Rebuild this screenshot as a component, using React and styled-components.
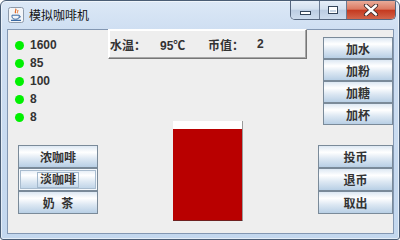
import React from "react";
import styled, { createGlobalStyle, css } from "styled-components";

const Global = createGlobalStyle`
  html, body { margin: 0; padding: 0; background: #ffffff; }
  * { box-sizing: border-box; }
`;

const Window = styled.div`
  width: 400px;
  height: 240px;
  border: 1px solid #4a5d75;
  border-radius: 6px 6px 3px 3px;
  background: linear-gradient(180deg, #dce8f6 0px, #cfdff2 28px, #c3d7ee 100%);
  box-shadow: inset 0 0 0 1px rgba(255, 255, 255, 0.55);
  display: flex;
  flex-direction: column;
  overflow: hidden;
`;

const TitleBar = styled.div`
  height: 28px;
  flex: none;
  display: flex;
  align-items: flex-start;
  padding-left: 7px;
`;

const TitleIcon = styled.svg`
  width: 16px;
  height: 16px;
  margin-top: 6px;
  flex: none;
`;

const TitleText = styled.span`
  margin: 6px 0 0 5px;
  font: 12px/16px "Noto Sans CJK SC", sans-serif;
  color: #111;
`;

const Captions = styled.div`
  margin-left: auto;
  margin-right: 3px;
  display: flex;
  height: 19px;
  border: 1px solid #55667f;
  border-top: none;
  border-radius: 0 0 5px 5px;
  overflow: hidden;
`;

const CapBtn = styled.div`
  width: ${(p) => p.$w}px;
  height: 100%;
  display: flex;
  align-items: center;
  justify-content: center;
  border-left: ${(p) => (p.$first ? "none" : "1px solid #6a7a92")};
  background: ${(p) =>
    p.$close
      ? "linear-gradient(180deg, #e9ab99 0%, #dc7a62 45%, #c53a20 52%, #d2654b 100%)"
      : "linear-gradient(180deg, #e6eef8 0%, #d3e0ef 45%, #bccde3 52%, #cddcee 100%)"};
`;

const MinGlyph = styled.span`
  width: 11px;
  height: 4px;
  margin-top: 5px;
  border: 1px solid #34455a;
  background: #fff;
`;

const MaxGlyph = styled.span`
  width: 10px;
  height: 8px;
  border: 1px solid #34455a;
  box-shadow: inset 0 0 0 1px #fff, inset 0 2px 0 1px #fff;
  background: #c9d6e6;
`;

const Client = styled.div`
  height: 205px;
  margin: 0 5px 0 6px;
  border: 1px solid #8397b2;
  background: #eeeeee;
  display: grid;
  grid-template-columns: 100px 200px 85px;
  grid-template-rows: 115px 88px;
  font-family: "Liberation Sans", "Noto Sans CJK SC", sans-serif;
  font-weight: bold;
  font-size: 12px;
  color: #333333;
`;

const StatusList = styled.div`
  padding: 6px 0 0 7px;
  display: flex;
  flex-direction: column;
`;

const StatusRow = styled.div`
  height: 18px;
  display: flex;
  align-items: center;
  gap: 6px;
`;

const Dot = styled.span`
  width: 9px;
  height: 9px;
  border-radius: 50%;
  background: #00f000;
`;

const Middle = styled.div`
  grid-row: 1 / span 2;
  display: flex;
  flex-direction: column;
  align-items: flex-start;
`;

const InfoPanel = styled.div`
  margin-top: -1px;
  width: 199px;
  height: 30px;
  border: 1px solid;
  border-color: #ffffff #767676 #767676 #ffffff;
  box-shadow: inset -1px -1px 0 #a6a6a6, inset 1px 1px 0 #ffffff;
  padding-left: 1px;
  display: grid;
  grid-template-columns: 50px 48px 49px 1fr;
  align-items: center;
`;

const Cup = styled.div`
  margin: 62px 0 0 65px;
  width: 69px;
  height: 99px;
  background: linear-gradient(180deg, #ffffff 0 8px, #b90000 8px 100%);
  box-shadow: 1px 0 0 #9a9a9a, 0 1px 0 #6e2020, 1px 1px 0 #888;
`;

const ButtonStack = styled.div`
  display: flex;
  flex-direction: column;
  width: ${(p) => p.$w}px;
  margin: ${(p) => p.$top}px 0 0 ${(p) => p.$left}px;
`;

const Btn = styled.div`
  height: ${(p) => p.$h}px;
  display: flex;
  align-items: center;
  justify-content: center;
  border: 1px solid #7a8a99;
  background: linear-gradient(180deg, #dde8f3 0%, #ffffff 30%, #dde8f3 60%, #b8cfe5 100%);
  white-space: pre;
  ${(p) =>
    p.$focused &&
    css`
      box-shadow: inset 0 0 0 1px #f4f8fc, inset 0 0 0 2px #a9bccf;
    `}
`;

const FocusRing = styled.span`
  border: 1px solid #a3b8cc;
  padding: 0 2px;
  line-height: 14px;
`;

const LeftButtons = styled(ButtonStack)`
  grid-column: 1;
  grid-row: 2;
`;

const RightTop = styled(ButtonStack)`
  grid-column: 3;
  grid-row: 1;
`;

const RightBottom = styled(ButtonStack)`
  grid-column: 3;
  grid-row: 2;
`;

const statuses = ["1600", "85", "100", "8", "8"];

export default function App() {
  return (
    <>
      <Global />
      <Window>
        <TitleBar>
          <TitleIcon viewBox="0 0 16 16">
            <rect x="0.5" y="0.5" width="15" height="15" rx="2" fill="#f3f5f8" stroke="#8d9aab" />
            <path d="M7.5 1.8c1.8 1.4-1.6 2.4 0.2 4.4" stroke="#e2661f" strokeWidth="1.2" fill="none" />
            <path d="M9.6 3c1.3 1.1-1.2 1.9 0.1 3.3" stroke="#e2661f" strokeWidth="1" fill="none" />
            <path d="M4 8.2h7.2v1.6c0 1.6-1.6 2.4-3.6 2.4S4 11.4 4 9.8z" fill="none" stroke="#3a69a3" strokeWidth="1" />
            <path d="M11.2 8.8c1.6 0 1.6 1.8 0 2" fill="none" stroke="#3a69a3" strokeWidth="0.9" />
            <path d="M3 13.4h10" stroke="#3a69a3" strokeWidth="1.1" />
          </TitleIcon>
          <TitleText>模拟咖啡机</TitleText>
          <Captions>
            <CapBtn $w={28} $first>
              <MinGlyph />
            </CapBtn>
            <CapBtn $w={27}>
              <MaxGlyph />
            </CapBtn>
            <CapBtn $w={49} $close>
              <svg width="16" height="12" viewBox="0 0 16 12">
                <path d="M3 1.5l10 9M13 1.5l-10 9" stroke="#3b2a2a" strokeWidth="4.2" strokeLinecap="round" />
                <path d="M3 1.5l10 9M13 1.5l-10 9" stroke="#ffffff" strokeWidth="2.4" strokeLinecap="round" />
              </svg>
            </CapBtn>
          </Captions>
        </TitleBar>
        <Client>
          <StatusList>
            {statuses.map((s, i) => (
              <StatusRow key={i}>
                <Dot />
                <span>{s}</span>
              </StatusRow>
            ))}
          </StatusList>
          <Middle>
            <InfoPanel>
              <span>水温：</span>
              <span>95℃</span>
              <span>币值：</span>
              <span>2</span>
            </InfoPanel>
            <Cup />
          </Middle>
          <RightTop $w={70} $top={7} $left={15}>
            <Btn $h={22}>加水</Btn>
            <Btn $h={22}>加粉</Btn>
            <Btn $h={22}>加糖</Btn>
            <Btn $h={22}>加杯</Btn>
          </RightTop>
          <LeftButtons $w={80} $top={0} $left={10}>
            <Btn $h={23}>浓咖啡</Btn>
            <Btn $h={23} $focused>
              <FocusRing>淡咖啡</FocusRing>
            </Btn>
            <Btn $h={23}>奶  茶</Btn>
          </LeftButtons>
          <RightBottom $w={75} $top={0} $left={10}>
            <Btn $h={23}>投币</Btn>
            <Btn $h={23}>退币</Btn>
            <Btn $h={23}>取出</Btn>
          </RightBottom>
        </Client>
      </Window>
    </>
  );
}
